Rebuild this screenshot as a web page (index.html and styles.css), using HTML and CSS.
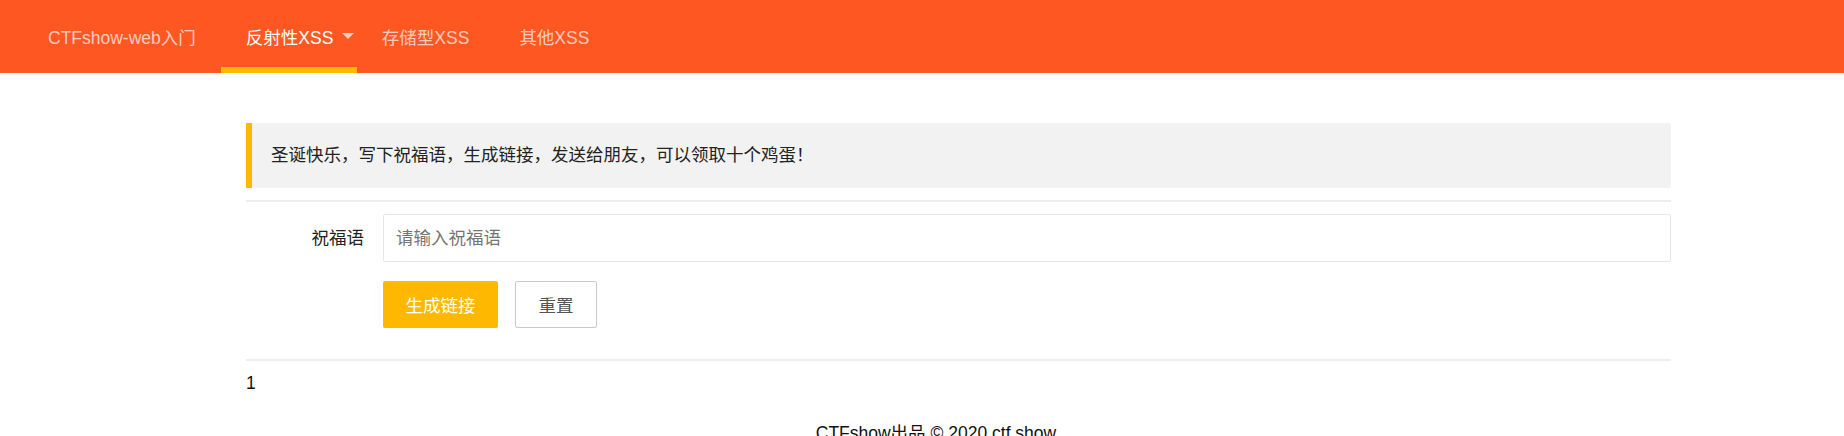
FILE: index.html
```html
<!DOCTYPE html>
<html lang="zh-CN">
<head>
<meta charset="utf-8">
<title>CTFshow XSS</title>
<link rel="stylesheet" href="styles.css">
</head>
<body>
<header class="header">
  <a class="nav-item">CTFshow-web入门</a>
  <a class="nav-item active">反射性XSS<span class="caret"></span></a>
  <a class="nav-item">存储型XSS</a>
  <a class="nav-item">其他XSS</a>
</header>
<main class="main">
  <blockquote class="quote">圣诞快乐，写下祝福语，生成链接，发送给朋友，可以领取十个鸡蛋！</blockquote>
  <div class="hr"></div>
  <form class="form">
    <div class="form-row">
      <label class="label">祝福语</label>
      <input class="input" type="text" placeholder="请输入祝福语">
    </div>
    <div class="form-row buttons">
      <button class="btn" type="button">生成链接</button>
      <button class="btn btn-primary" type="reset">重置</button>
    </div>
  </form>
  <div class="hr"></div>
  <div class="result">1</div>
</main>
<footer class="footer">CTFshow出品 © 2020 ctf.show</footer>
</body>
</html>
```
FILE: styles.css
```css
html, body {
  margin: 0;
  padding: 0;
  background: #fff;
}
body {
  font-family: "Liberation Sans", "Noto Sans CJK SC", sans-serif;
  font-size: 17.5px;
  color: #333;
  overflow: hidden;
}
.header {
  display: flex;
  height: 73px;
  background: #FF5722;
  padding-left: 23px;
}
.nav-item {
  display: flex;
  align-items: center;
  padding: 0 25px;
  color: rgba(255, 255, 255, 0.7);
  text-decoration: none;
  cursor: pointer;
}
.nav-item.active {
  color: #fff;
  padding-right: 3px;
  box-shadow: inset 0 -6px 0 #FFB800;
}
.caret {
  display: inline-block;
  width: 0;
  height: 0;
  border-left: 6.5px solid transparent;
  border-right: 6.5px solid transparent;
  border-top: 6.5px solid rgba(255, 255, 255, 0.7);
  margin-left: 8.5px;
  margin-bottom: 1px;
}
.main {
  margin: 50px 0 0 246px;
  width: 1425px;
}
.quote {
  margin: 0;
  background: #f2f2f2;
  border-left: 6px solid #FFB800;
  border-radius: 0 2px 2px 0;
  padding: 19px 19px;
  line-height: 27px;
  color: #222;
}
.hr {
  height: 2px;
  background: #eeeeee;
  margin: 12px 0;
}
.form {
  display: flow-root;
  margin: 0;
}
.form-row {
  display: flex;
  margin-bottom: 19px;
}
.label {
  width: 137px;
  box-sizing: border-box;
  padding-right: 19px;
  text-align: right;
  line-height: 48px;
  color: #222;
}
.input {
  flex: 1;
  height: 48px;
  box-sizing: border-box;
  border: 1px solid #e6e6e6;
  border-radius: 2px;
  padding: 0 12px;
  font-family: inherit;
  font-size: 17.5px;
  color: #666;
  outline: none;
}
.input::placeholder {
  color: #757575;
}
.buttons {
  padding-left: 137px;
}
.btn {
  height: 47px;
  box-sizing: border-box;
  padding: 0 22.5px;
  border: none;
  border-radius: 2px;
  background: #FFB800;
  color: #fff;
  font-family: inherit;
  font-size: 17.5px;
  cursor: pointer;
}
.btn-primary {
  margin-left: 17px;
  background: #fff;
  border: 1px solid #C9C9C9;
  color: #555;
}
.result {
  line-height: 20px;
  color: #111;
}
.footer {
  margin-top: 30px;
  text-align: center;
  padding-left: 28px;
  line-height: 20px;
  color: #111;
}
```
